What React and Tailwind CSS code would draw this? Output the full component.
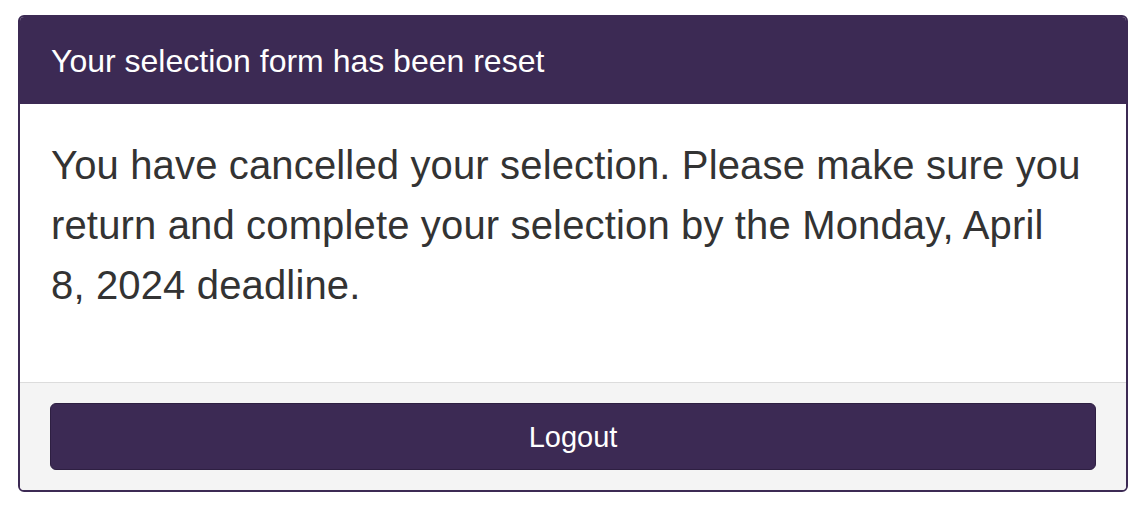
export default function App() {
  return (
    <div className="min-h-screen bg-white pt-[15px] pl-[18px]" style={{ fontFamily: "'Liberation Sans', Arial, sans-serif" }}>
      <div className="w-[1110px] rounded-md border-2 border-[#3c2a54] overflow-hidden bg-white">
        {/* Header */}
        <div className="bg-[#3c2a54] h-[87px] flex items-center px-[31px]">
          <h2 className="text-[32px] text-white leading-none">Your selection form has been reset</h2>
        </div>

        {/* Body */}
        <div className="h-[278px] px-[31px] pt-[31px]">
          <p className="text-[40px] leading-[60px] tracking-[0.15px] text-[#333333] whitespace-nowrap">
            You have cancelled your selection. Please make sure you<br />
            return and complete your selection by the Monday, April<br />
            8, 2024 deadline.
          </p>
        </div>

        {/* Footer */}
        <div className="border-t border-[#dcdcdc] bg-[#f4f4f4] px-[30px] pt-[20px] pb-[20px]">
          <button className="w-full h-[67px] pt-[3px] rounded-md bg-[#3c2a54] border border-[#2e1f42] text-white text-[29px]">
            Logout
          </button>
        </div>
      </div>
    </div>
  );
}
